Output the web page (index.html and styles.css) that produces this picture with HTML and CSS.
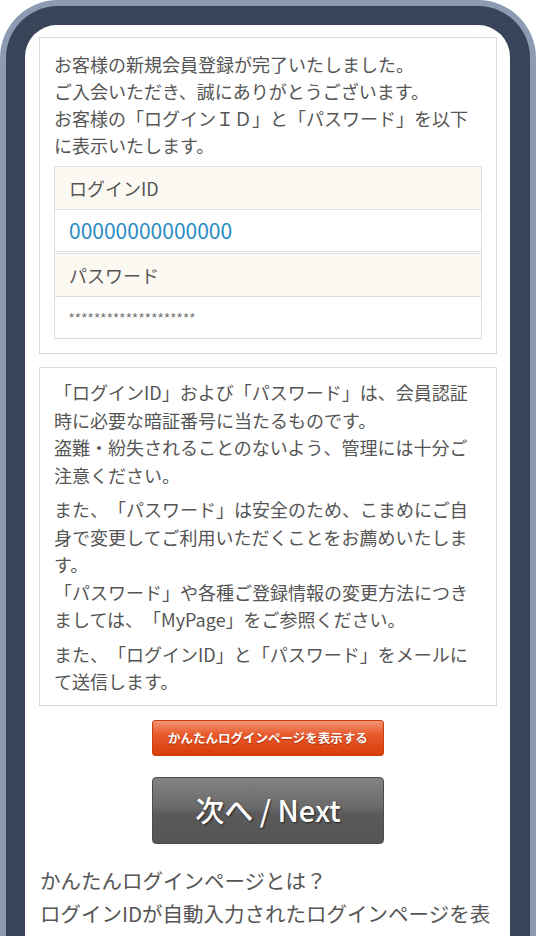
FILE: index.html
```html
<!DOCTYPE html>
<html lang="ja">
<head>
    <meta charset="UTF-8">
    <meta name="viewport" content="width=device-width, initial-scale=1.0">
    <title>会員登録完了</title>
    <link rel="stylesheet" href="styles.css">
</head>
<body>
    <div class="frame">
        <div class="screen">
            <div class="box">
                <p class="lead">お客様の新規会員登録が完了いたしました。<br>ご入会いただき、誠にありがとうございます。<br>お客様の「ログインＩＤ」と「パスワード」を以下に表示いたします。</p>

                <div class="cred-group">
                    <div class="cred-label">ログインID</div>
                    <div class="cred-value cred-id">00000000000000</div>
                </div>
                <div class="cred-group">
                    <div class="cred-label">パスワード</div>
                    <div class="cred-value cred-pw">********************</div>
                </div>
            </div>

            <div class="box note">
                <p>「ログインID」および「パスワード」は、会員認証時に必要な暗証番号に当たるものです。<br>盗難・紛失されることのないよう、管理には十分ご注意ください。</p>
                <p>また、「パスワード」は安全のため、こまめにご自身で変更してご利用いただくことをお薦めいたします。<br>「パスワード」や各種ご登録情報の変更方法につきましては、「MyPage」をご参照ください。</p>
                <p>また、「ログインID」と「パスワード」をメールにて送信します。</p>
            </div>

            <div class="actions">
                <a href="#" class="btn-easy">かんたんログインページを表示する</a>
                <a href="#" class="btn-next">次へ / Next</a>
            </div>

            <div class="about">
                <p>かんたんログインページとは？<br>ログインIDが自動入力されたログインページを表示します。ブックマークしておくと便利です。</p>
            </div>
        </div>
    </div>
</body>
</html>
```

FILE: styles.css
```css
:root {
    --frame-edge: #8c9ab4;
    --frame-dark: #3a4459;
    --line: #dcdcdc;
    --text: #555555;
    --cream: #fcf9f3;
    --link: #2a8cc4;
}

* {
    margin: 0;
    padding: 0;
    box-sizing: border-box;
}

body {
    background-color: #ffffff;
    font-family: "Noto Sans CJK JP", "Noto Sans", sans-serif;
    color: var(--text);
    text-spacing-trim: space-all;
}

.frame {
    width: 536px;
    min-height: 936px;
    background-color: var(--frame-dark);
    border: 6px solid var(--frame-edge);
    border-bottom: none;
    border-radius: 58px 58px 0 0;
    padding: 19px 20px 0 19px;
}

.screen {
    background-color: #ffffff;
    border-radius: 32px 32px 0 0;
    min-height: 920px;
    padding: 12px 13px 0 14px;
}

.box {
    border: 1px solid var(--line);
    padding: 13px 14px 14px;
    font-size: 18px;
    line-height: 27px;
}

.lead {
    margin-bottom: 7px;
}

.cred-group {
    border: 1px solid var(--line);
}

.cred-group + .cred-group {
    margin-top: 1px;
}

.cred-label {
    background-color: var(--cream);
    border-bottom: 1px solid var(--line);
    padding: 0 14px;
    line-height: 42px;
    font-size: 18px;
}

.cred-value {
    padding: 0 14px;
    line-height: 41px;
}

.cred-id {
    color: var(--link);
    font-size: 21px;
}

.cred-pw {
    font-family: "Liberation Sans", sans-serif;
    font-size: 13px;
    letter-spacing: 1.3px;
    color: #666;
}

.note {
    margin-top: 13px;
    padding: 11px 14px 9px;
    line-height: 27.5px;
}

.note p + p {
    margin-top: 7px;
}

.actions {
    display: flex;
    flex-direction: column;
    align-items: center;
    padding-top: 14px;
}

.btn-easy {
    display: block;
    width: 232px;
    height: 36px;
    line-height: 34px;
    text-align: center;
    text-decoration: none;
    color: #ffffff;
    font-size: 12.5px;
    font-weight: bold;
    border: 1px solid #cf3d0c;
    border-radius: 3px;
    background: linear-gradient(to bottom, #f39574 0%, #e8592c 40%, #da3d0a 100%);
    text-shadow: 0 1px 1px rgba(120, 30, 0, 0.6);
}

.btn-next {
    display: block;
    width: 232px;
    height: 67px;
    margin-top: 21px;
    line-height: 63px;
    text-align: center;
    text-decoration: none;
    color: #ffffff;
    font-size: 29px;
    font-weight: 500;
    border: 1px solid #4b4b4b;
    border-radius: 4px;
    background: linear-gradient(to bottom, #828282 0%, #6a6a6a 45%, #5a5a5a 55%, #555555 100%);
    text-shadow: 1px 1px 2px rgba(0, 0, 0, 0.6);
}

.about {
    padding: 20px 1px 0;
    font-size: 20.5px;
    line-height: 33px;
}
```
